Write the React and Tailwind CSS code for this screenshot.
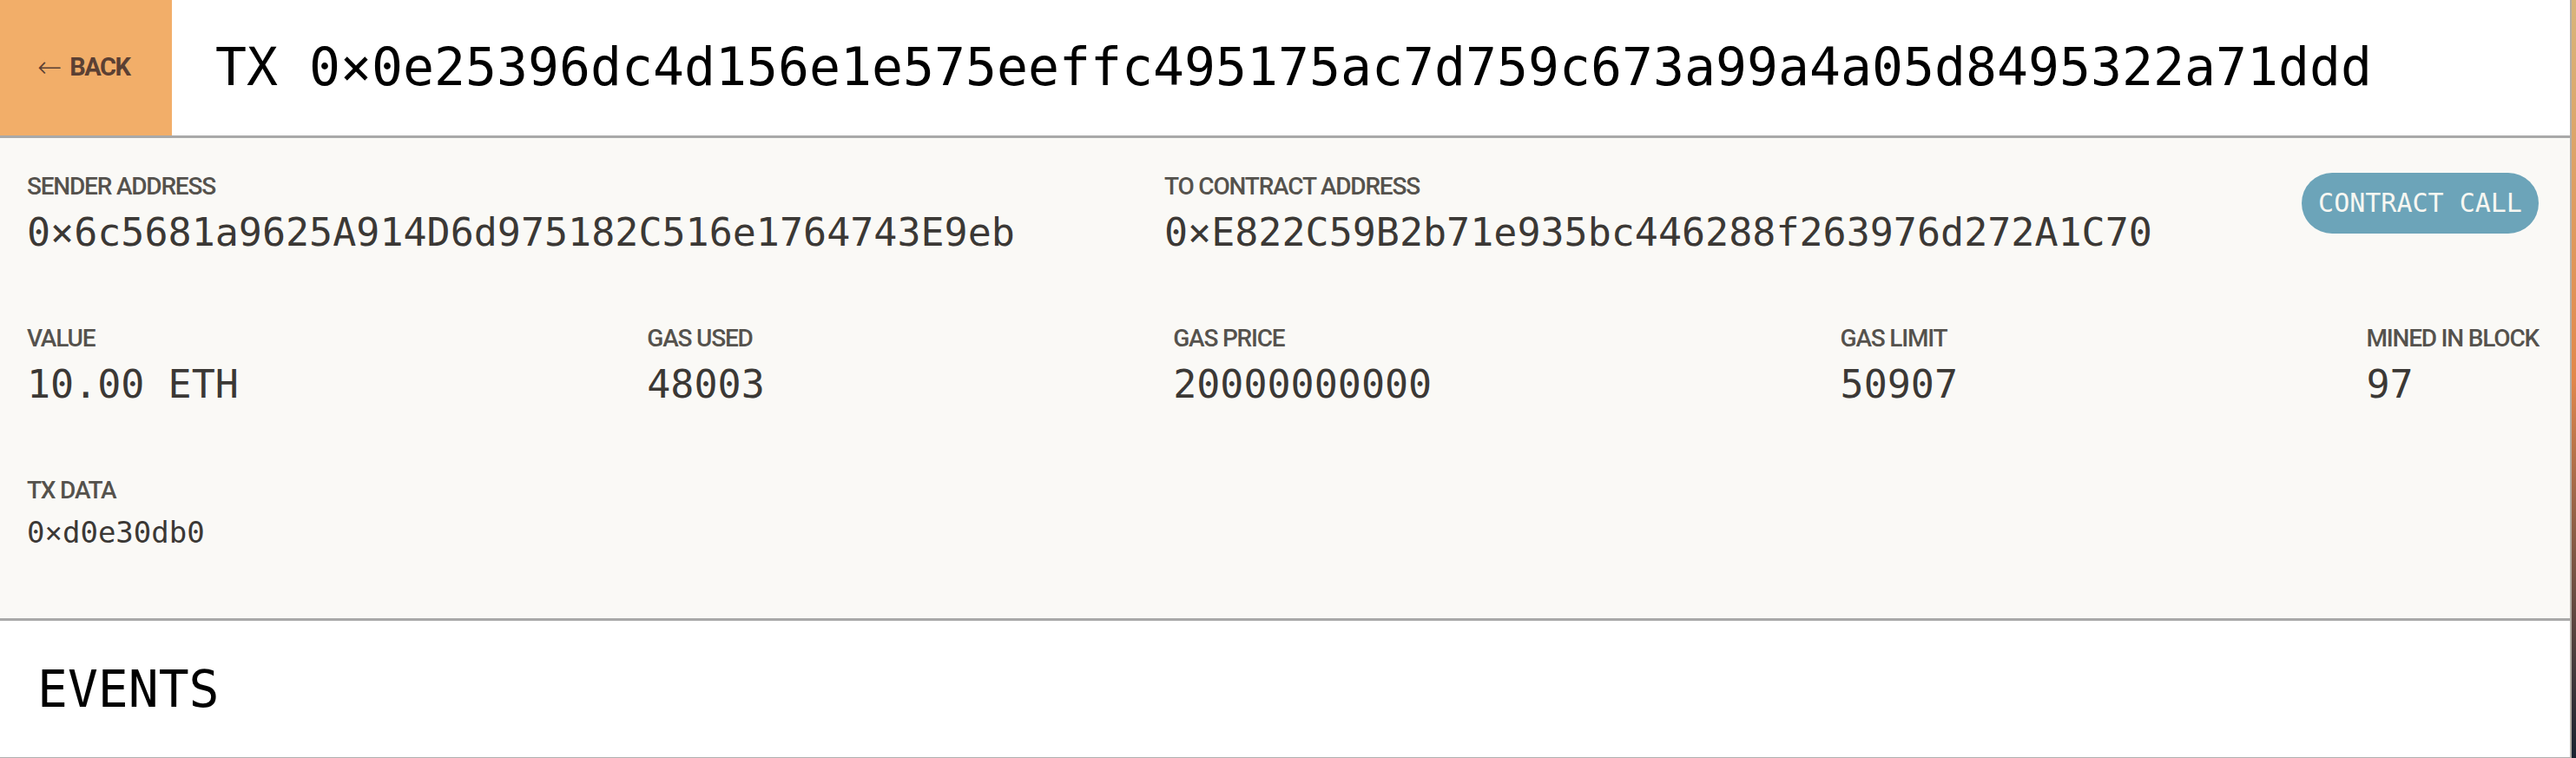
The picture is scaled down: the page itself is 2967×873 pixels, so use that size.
import React from 'react';

const mono = "font-['DejaVu_Sans_Mono','Liberation_Mono',monospace]";
const cond = "font-['Roboto','Liberation_Sans',sans-serif]";

// one label/value pair in the details panel
function Field({ label, value, small }) {
  return (
    <div className="flex flex-col">
      <div className={`${cond} text-[28px] leading-[28px] font-medium tracking-[-1.2px] text-[#55524d] uppercase whitespace-nowrap`}>
        {label}
      </div>
      <div
        className={`${mono} text-[#3b3835] whitespace-nowrap ${
          small ? 'mt-[17px] text-[34px] leading-[34px]' : 'mt-[16px] text-[45px] leading-[45px]'
        }`}
      >
        {value}
      </div>
    </div>
  );
}

export default function App() {
  return (
    <div className="flex w-[2967px] h-[873px] overflow-hidden bg-white">
      <div className="w-[2962px] flex flex-col border-r-[2px] border-[#b3aea6]">
        {/* Header */}
        <div className="flex h-[159px] border-b-[3px] border-[#a9a9a9] bg-white">
          <div className="w-[198px] bg-[#f2ae69] flex items-center justify-center gap-[9px] text-[#5b4033] pb-[2px] pr-[6px]">
            <span className="font-['DejaVu_Sans',sans-serif] text-[34px] leading-none font-light">←</span>
            <span className={`${cond} text-[29px] leading-none font-bold tracking-[-1.5px]`}>BACK</span>
          </div>
          <div className={`${mono} flex items-center pl-[50px] text-[59.8px] leading-none text-black whitespace-nowrap`}>
            TX 0×0e25396dc4d156e1e575eeffc495175ac7d759c673a99a4a05d8495322a71ddd
          </div>
        </div>

        {/* Details */}
        <div className="bg-[#faf9f6] pt-[42px] pb-[82px] pl-[31px] pr-[36px] border-b-[3px] border-[#a9a9a9] flex flex-col gap-[86px]">
          <div className="flex justify-between items-start">
            <Field label="Sender Address" value="0×6c5681a9625A914D6d975182C516e1764743E9eb" />
            <Field label="To Contract Address" value="0×E822C59B2b71e935bc446288f263976d272A1C70" />
            <div
              className={`${mono} -mt-[2px] h-[70px] w-[273px] rounded-full bg-[#6ca4b9] text-[#f7f7f2] text-[30px] leading-none flex items-center justify-center whitespace-pre`}
            >
              CONTRACT CALL
            </div>
          </div>
          <div className="flex justify-between items-start">
            <Field label="Value" value="10.00 ETH" />
            <Field label="Gas Used" value="48003" />
            <Field label="Gas Price" value="20000000000" />
            <Field label="Gas Limit" value="50907" />
            <Field label="Mined in Block" value="97" />
          </div>
          <div className="flex">
            <Field label="TX Data" value="0×d0e30db0" small />
          </div>
        </div>

        {/* Events */}
        <div className="flex-1 bg-white border-b border-[#b0b0b0] pt-[50px] px-[43px]">
          <h2 className={`${mono} text-[58px] leading-[58px] text-black`}>EVENTS</h2>
        </div>
      </div>
      {/* desktop wallpaper peeking at the edge */}
      <div className="flex-1 bg-gradient-to-b from-[#d8b57a] via-[#e2874a] to-[#1a2230]" />
    </div>
  );
}
